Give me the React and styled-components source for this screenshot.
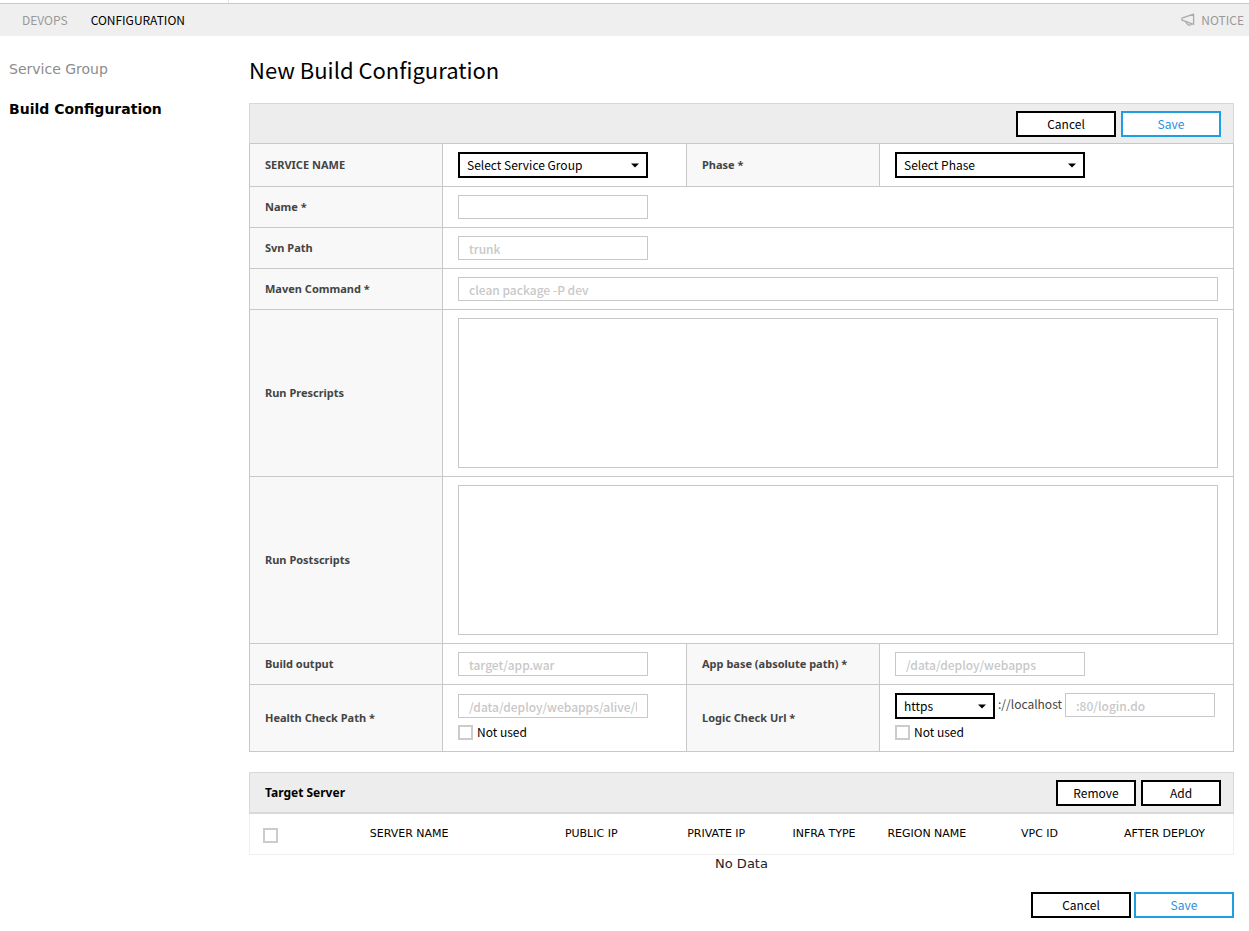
import React from "react";
import styled, { createGlobalStyle } from "styled-components";

const sans = `"Noto Sans CJK KR", "Open Sans", sans-serif`;
const wide = `"DejaVu Sans", "Noto Sans", sans-serif`;
const label = `"Noto Sans", "Open Sans", sans-serif`;
const line = "#c8c8c8";
const softLine = "#d8d8d8";

const GlobalStyle = createGlobalStyle`
  *, *::before, *::after { box-sizing: border-box; }
  body { margin: 0; background: #fff; color: #000; font: 12px/16px ${sans}; }
  h1, h2, ul { margin: 0; padding: 0; }
  ul { list-style: none; }
  a { text-decoration: none; }
  button, input, select, textarea { font: inherit; margin: 0; }
`;

const TopEdge = styled.div`
  width: 229px;
  height: 3px;
  border-right: 1px solid #e4e4e4;
`;

const TopBar = styled.nav`
  display: flex;
  align-items: center;
  gap: 23px;
  height: 33px;
  padding: 0 5px 0 22px;
  border-top: 1px solid ${line};
  background: #efefef;
`;

const TopLink = styled.a`
  display: flex;
  align-items: center;
  gap: 6px;
  color: ${(p) => (p.$active ? "#000" : "#999")};
  margin-left: ${(p) => (p.$end ? "auto" : "0")};
`;

const Body = styled.div`
  display: grid;
  grid-template-columns: 249px minmax(0, 1fr);
`;

const Side = styled.nav`
  padding: 23px 9px;
  font-family: ${wide};
  font-size: 14px;
  line-height: 20px;
`;

const SideList = styled.ul`
  display: flex;
  flex-direction: column;
  gap: 20px;
`;

const SideLink = styled.a`
  color: ${(p) => (p.$active ? "#000" : "#8c8c8c")};
  font-weight: ${(p) => (p.$active ? 700 : 400)};
`;

const Main = styled.main`
  padding: 17px 15px 12px 0;
`;

const Title = styled.h1`
  font-size: 22px;
  line-height: 32px;
  font-weight: 400;
  margin-bottom: 18px;
`;

const PanelHead = styled.div`
  display: flex;
  align-items: center;
  justify-content: flex-end;
  gap: 5px;
  height: ${(p) => (p.$thick ? "42px" : "41px")};
  padding: 0 12px 0 15px;
  background: #ededed;
  border: 1px solid ${softLine};
  border-bottom: ${(p) => (p.$thick ? `2px solid ${softLine}` : `1px solid ${line}`)};
`;

const PanelTitle = styled.h2`
  margin-right: auto;
  font: 700 12px/16px ${label};
`;

const Button = styled.button`
  width: ${(p) => (p.$small ? "80px" : "100px")};
  height: 26px;
  padding: 0;
  border: 2px solid ${(p) => (p.$primary ? "#1f9fe0" : "#000")};
  background: #fff;
  color: ${(p) => (p.$primary ? "#2a8fdc" : "#000")};
  line-height: 20px;
  cursor: pointer;
`;

const Form = styled.div`
  border: 1px solid ${line};
  border-width: 0 1px;
`;

const Row = styled.div`
  display: grid;
  grid-template-columns: ${(p) => (p.$double ? "193px 243fr 194px 353fr" : "193px 1fr")};
  border-bottom: 1px solid ${line};
`;

const Label = styled.label`
  display: flex;
  align-items: center;
  padding: 0 15px;
  background: #f8f8f8;
  border-right: 1px solid ${line};
  border-left: ${(p) => (p.$second ? `1px solid ${line}` : "0")};
  color: #444;
  font: 700 11px/16px ${label};
`;

const Cell = styled.div`
  display: flex;
  flex-direction: column;
  gap: 5px;
  min-width: 0;
  padding: ${(p) => (p.$tall ? "8px 15px 11px" : "8px 15px")};
`;

const Inline = styled.div`
  display: flex;
  align-items: ${(p) => (p.$center ? "center" : "flex-start")};
  gap: 3px;
  min-height: 26px;
  color: #444;
`;

const Protocol = styled.span`
  line-height: 22px;
`;

const TextInput = styled.input`
  width: ${(p) => p.$width || "190px"};
  max-width: 100%;
  min-width: 0;
  height: 24px;
  padding: 0 10px;
  border: 1px solid ${line};
  background: #fff;
  &::placeholder { color: #c8c8c8; font-weight: 500; opacity: 1; }
`;

const TextArea = styled.textarea`
  display: block;
  width: 100%;
  height: 150px;
  padding: 8px 10px;
  border: 1px solid ${line};
  resize: none;
`;

const SelectBox = styled.div`
  display: grid;
  align-items: center;
  flex: none;
  width: ${(p) => p.$width || "190px"};
  & > * { grid-area: 1 / 1; }
  & > svg { justify-self: end; margin-right: 9px; pointer-events: none; }
`;

const SelectInput = styled.select`
  appearance: none;
  width: 100%;
  height: 26px;
  padding: 0 24px 0 7px;
  border: 2px solid #000;
  border-radius: 0;
  background: #fff;
  color: #000;
`;

const CheckLabel = styled.label`
  display: flex;
  align-items: center;
  gap: 4px;
  height: 16px;
`;

const CheckBox = styled.input`
  appearance: none;
  display: block;
  flex: none;
  width: 15px;
  height: 15px;
  border: 2px solid #ccc;
  background: #fff;
`;

const Section = styled.section`
  margin-top: 20px;
`;

const Servers = styled.table`
  width: 100%;
  table-layout: fixed;
  border-spacing: 0;
  font-family: ${wide};
`;

const Th = styled.th`
  width: ${(p) => p.$width};
  height: 41px;
  padding: ${(p) => (p.$check ? "2px 0 0 13px" : "0")};
  border-bottom: 1px solid #eee;
  font-size: 11px;
  font-weight: 400;
  text-align: center;
  &:first-child { border-left: 1px solid #eee; }
  &:last-child { border-right: 1px solid #eee; }
`;

const Empty = styled.td`
  padding: 0;
  height: 17px;
  font-size: 13px;
  line-height: 17px;
  text-align: center;
  color: #222;
`;

const Footer = styled.div`
  display: flex;
  justify-content: flex-end;
  gap: 3px;
  margin-top: 20px;
`;

const Megaphone = () => (
  <svg width="14" height="14" viewBox="0 0 14 14" fill="none" stroke="#aaa" strokeWidth="1.3" strokeLinejoin="round" aria-hidden="true">
    <path d="M12.6 1.2 V11.4 L1 7.2 V5.2 Z" />
    <path d="M4.8 8.8 L6.4 11.2 C7.6 12.8 10 12.4 10.4 10.6" />
  </svg>
);

const Select = ({ id, width, option }) => (
  <SelectBox $width={width}>
    <SelectInput id={id} aria-label={option}>
      <option>{option}</option>
    </SelectInput>
    <svg width="8" height="5" viewBox="0 0 8 5" aria-hidden="true">
      <path d="M0 0.5 H8 L4 4.5 Z" fill="#000" />
    </svg>
  </SelectBox>
);

const NotUsed = () => (
  <CheckLabel>
    <CheckBox type="checkbox" />
    Not used
  </CheckLabel>
);

const columns = [
  ["SERVER NAME", "24%"],
  ["PUBLIC IP", "13%"],
  ["PRIVATE IP", "12.4%"],
  ["INFRA TYPE", "9.5%"],
  ["REGION NAME", "11.4%"],
  ["VPC ID", "11.5%"],
  ["AFTER DEPLOY", "14%"],
];

export default function App() {
  return (
    <>
      <GlobalStyle />
      <TopEdge />
      <TopBar>
        <TopLink href="#devops">DEVOPS</TopLink>
        <TopLink href="#configuration" $active>CONFIGURATION</TopLink>
        <TopLink href="#notice" $end><Megaphone />NOTICE</TopLink>
      </TopBar>
      <Body>
        <Side>
          <SideList>
            <li><SideLink href="#service-group">Service Group</SideLink></li>
            <li><SideLink href="#build-configuration" $active>Build Configuration</SideLink></li>
          </SideList>
        </Side>
        <Main>
          <Title>New Build Configuration</Title>
          <PanelHead>
            <Button type="button">Cancel</Button>
            <Button type="button" $primary>Save</Button>
          </PanelHead>
          <Form>
            <Row $double>
              <Label htmlFor="service">SERVICE NAME</Label>
              <Cell><Select id="service" option="Select Service Group" /></Cell>
              <Label htmlFor="phase" $second>Phase *</Label>
              <Cell><Select id="phase" option="Select Phase" /></Cell>
            </Row>
            <Row>
              <Label htmlFor="name">Name *</Label>
              <Cell><TextInput id="name" /></Cell>
            </Row>
            <Row>
              <Label htmlFor="svn">Svn Path</Label>
              <Cell><TextInput id="svn" placeholder="trunk" /></Cell>
            </Row>
            <Row>
              <Label htmlFor="maven">Maven Command *</Label>
              <Cell><TextInput id="maven" $width="100%" placeholder="clean package -P dev" /></Cell>
            </Row>
            <Row>
              <Label htmlFor="pre">Run Prescripts</Label>
              <Cell><TextArea id="pre" /></Cell>
            </Row>
            <Row>
              <Label htmlFor="post">Run Postscripts</Label>
              <Cell><TextArea id="post" /></Cell>
            </Row>
            <Row $double>
              <Label htmlFor="output">Build output</Label>
              <Cell><TextInput id="output" placeholder="target/app.war" /></Cell>
              <Label htmlFor="base" $second>App base (absolute path) *</Label>
              <Cell><TextInput id="base" placeholder="/data/deploy/webapps" /></Cell>
            </Row>
            <Row $double>
              <Label htmlFor="health">Health Check Path *</Label>
              <Cell $tall>
                <Inline $center>
                  <TextInput id="health" placeholder="/data/deploy/webapps/alive/l7check" />
                </Inline>
                <NotUsed />
              </Cell>
              <Label htmlFor="logic" $second>Logic Check Url *</Label>
              <Cell $tall>
                <Inline>
                  <Select id="scheme" width="100px" option="https" />
                  <Protocol>://localhost</Protocol>
                  <TextInput id="logic" $width="150px" placeholder=":80/login.do" />
                </Inline>
                <NotUsed />
              </Cell>
            </Row>
          </Form>
          <Section>
            <PanelHead $thick>
              <PanelTitle>Target Server</PanelTitle>
              <Button type="button" $small>Remove</Button>
              <Button type="button" $small>Add</Button>
            </PanelHead>
            <Servers>
              <thead>
                <tr>
                  <Th $width="42px" $check><CheckBox type="checkbox" aria-label="Select all servers" /></Th>
                  {columns.map(([name, width]) => (
                    <Th key={name} $width={width} scope="col">{name}</Th>
                  ))}
                </tr>
              </thead>
              <tbody>
                <tr><Empty colSpan={8}>No Data</Empty></tr>
              </tbody>
            </Servers>
          </Section>
          <Footer>
            <Button type="button">Cancel</Button>
            <Button type="button" $primary>Save</Button>
          </Footer>
        </Main>
      </Body>
    </>
  );
}
